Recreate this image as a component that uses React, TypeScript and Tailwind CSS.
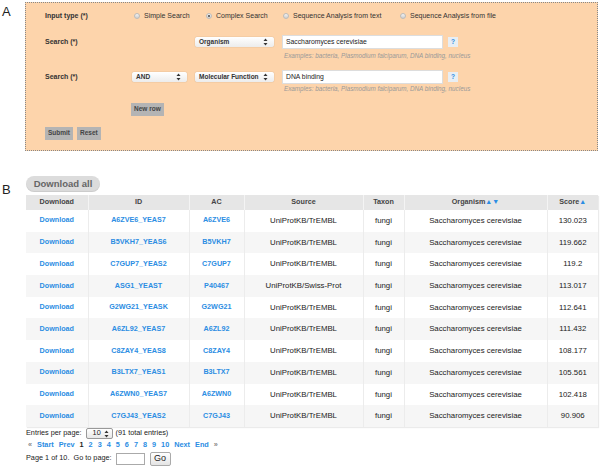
import React from "react";

const rows = [
  ["A6ZVE6_YEAS7", "A6ZVE6", "UniProtKB/TrEMBL", "130.023"],
  ["B5VKH7_YEAS6", "B5VKH7", "UniProtKB/TrEMBL", "119.662"],
  ["C7GUP7_YEAS2", "C7GUP7", "UniProtKB/TrEMBL", "119.2"],
  ["ASG1_YEAST", "P40467", "UniProtKB/Swiss-Prot", "113.017"],
  ["G2WG21_YEASK", "G2WG21", "UniProtKB/TrEMBL", "112.641"],
  ["A6ZL92_YEAS7", "A6ZL92", "UniProtKB/TrEMBL", "111.432"],
  ["C8ZAY4_YEAS8", "C8ZAY4", "UniProtKB/TrEMBL", "108.177"],
  ["B3LTX7_YEAS1", "B3LTX7", "UniProtKB/TrEMBL", "105.561"],
  ["A6ZWN0_YEAS7", "A6ZWN0", "UniProtKB/TrEMBL", "102.418"],
  ["C7GJ43_YEAS2", "C7GJ43", "UniProtKB/TrEMBL", "90.906"],
];

function Arrows() {
  return (
    <svg width="5" height="8" viewBox="0 0 5 8" className="flex-shrink-0">
      <path d="M2.5 0.5L4.5 3H0.5z" fill="#333" />
      <path d="M2.5 7.5L4.5 5H0.5z" fill="#333" />
    </svg>
  );
}

function Select({ label, width }: { label: string; width: string }) {
  return (
    <div
      className={`${width} h-[10px] flex items-center justify-between pl-[4px] pr-[6px] rounded-[2px] bg-gradient-to-b from-white to-[#ececec] shadow-[0_0_1px_rgba(0,0,0,0.35)] text-[6.5px] font-bold text-[#333] leading-none`}
    >
      <span>{label}</span>
      <Arrows />
    </div>
  );
}

function Radio({ checked, label }: { checked?: boolean; label: string }) {
  return (
    <div className="flex items-center gap-[4px]">
      <span className="w-[6px] h-[6px] rounded-full bg-gradient-to-b from-[#f4f4f4] to-[#cfcfcf] border border-[#bbb] flex items-center justify-center">
        {checked && <span className="w-[2px] h-[2px] rounded-full bg-[#444]" />}
      </span>
      <span>{label}</span>
    </div>
  );
}

function GrayButton({ label }: { label: string }) {
  return (
    <div className="h-[13px] px-[3px] bg-[#b4b4b4] flex items-center text-[6.5px] font-bold text-[#444] leading-none">
      {label}
    </div>
  );
}

function Hint() {
  return (
    <div className="ml-[239px] h-[10px] leading-[10px] text-[6.3px] italic text-[#999]">
      Examples: bacteria, Plasmodium falciparum, DNA binding, nucleus
    </div>
  );
}

function SearchInput({ value }: { value: string }) {
  return (
    <div className="flex items-center gap-[5px]">
      <div className="w-[161px] h-[14px] bg-white border border-[#ddd] pl-[3px] flex items-center text-[6.8px] font-medium text-[#222]">
        {value}
      </div>
      <div className="w-[10px] h-[10px] bg-[#e8eef4] text-[#2b8de3] font-bold text-[6.5px] flex items-center justify-center">
        ?
      </div>
    </div>
  );
}

export default function App() {
  return (
    <div
      className="w-[600px] h-[466px] bg-white text-[#222] overflow-hidden"
      style={{ fontFamily: '"Liberation Sans", Arial, sans-serif' }}
    >
      {/* Panel A */}
      <div className="flex">
        <div className="w-[25px] pl-[2px] pt-[5px] text-[13px] leading-none">A</div>
        <div className="mt-[2px] w-[573px] h-[149px] border border-dotted border-[#888] bg-[#fdd4ab] pl-[19px] text-[7px]">
          <div className="mt-[7px] h-[12px] flex items-center">
            <div className="w-[89px] font-bold text-[#333]">Input type (*)</div>
            <div className="flex items-center text-[#333]">
              <div className="w-[72px]"><Radio label="Simple Search" /></div>
              <div className="w-[77px]"><Radio checked label="Complex Search" /></div>
              <div className="w-[117px]"><Radio label="Sequence Analysis from text" /></div>
              <Radio label="Sequence Analysis from file" />
            </div>
          </div>

          <div className="mt-[13px] h-[14px] flex items-center">
            <div className="w-[87px] font-bold text-[#333]">Search (*)</div>
            <div className="w-[63px]" />
            <Select label="Organism" width="w-[79px]" />
            <div className="w-[8px]" />
            <SearchInput value="Saccharomyces cerevisiae" />
          </div>
          <div className="mt-[2px]"><Hint /></div>

          <div className="mt-[9px] h-[14px] flex items-center">
            <div className="w-[87px] font-bold text-[#333]">Search (*)</div>
            <Select label="AND" width="w-[55px]" />
            <div className="w-[8px]" />
            <Select label="Molecular Function" width="w-[79px]" />
            <div className="w-[8px]" />
            <SearchInput value="DNA binding" />
          </div>
          <Hint />

          <div className="mt-[9px] ml-[86px] flex">
            <GrayButton label="New row" />
          </div>

          <div className="mt-[11px] flex gap-[4px]">
            <GrayButton label="Submit" />
            <GrayButton label="Reset" />
          </div>
        </div>
      </div>

      {/* Panel B */}
      <div className="flex mt-[25px]">
        <div className="w-[26px] pl-[2px] pt-[7px] text-[13px] leading-none">B</div>
        <div className="w-[572px]">
          <div className="w-[74px] h-[16px] rounded-full bg-[#dcdcdc] shadow-[inset_0_-1px_1px_rgba(0,0,0,0.08)] flex items-center justify-center text-[9.5px] font-bold text-[#666]">
            Download all
          </div>
          <table className="mt-[3px] w-[572px] table-fixed border-collapse text-[7.2px] shadow-[1px_1px_1px_rgba(0,0,0,0.08)]">
            <colgroup>
              <col className="w-[62px]" />
              <col className="w-[101px]" />
              <col className="w-[55px]" />
              <col className="w-[119px]" />
              <col className="w-[41px]" />
              <col className="w-[143px]" />
              <col className="w-[51px]" />
            </colgroup>
            <thead>
              <tr className="h-[15px] bg-[#e6e6e6] text-[#444] font-bold">
                <th className="border-r border-[#f4f4f4]">Download</th>
                <th className="border-r border-[#f4f4f4]">ID</th>
                <th className="border-r border-[#f4f4f4]">AC</th>
                <th className="border-r border-[#f4f4f4]">Source</th>
                <th className="border-r border-[#f4f4f4]">Taxon</th>
                <th className="border-r border-[#f4f4f4]">
                  Organism<span className="text-[#2b8de3] text-[7px]">▲▼</span>
                </th>
                <th>
                  Score<span className="text-[#2b8de3] text-[7px]">▲</span>
                </th>
              </tr>
            </thead>
            <tbody>
              {rows.map((r, i) => (
                <tr
                  key={r[0]}
                  className={`h-[21.7px] text-center ${i % 2 === 0 ? "bg-white" : "bg-[#f6f6f6]"}`}
                >
                  <td className="border-r border-[#ececec] font-bold text-[#2b8de3]">Download</td>
                  <td className="border-r border-[#ececec] font-bold text-[#2b8de3]">{r[0]}</td>
                  <td className="border-r border-[#ececec] font-bold text-[#2b8de3]">{r[1]}</td>
                  <td className="border-r border-[#ececec] text-[#222] text-[7.8px]">{r[2]}</td>
                  <td className="border-r border-[#ececec] text-[#222] text-[7.8px]">fungi</td>
                  <td className="border-r border-[#ececec] text-[#222] text-[7.8px]">Saccharomyces cerevisiae</td>
                  <td className="text-[#222] text-[7.8px]">{r[3]}</td>
                </tr>
              ))}
            </tbody>
          </table>

          <div className="mt-[1px] h-[12px] flex items-center text-[7.3px] text-[#222]">
            <span>Entries per page:</span>
            <div className="ml-[4px] w-[27px] h-[11px] border border-[#999] rounded-[2px] bg-gradient-to-b from-white to-[#e8e8e8] flex items-center justify-between pl-[6px] pr-[3px]">
              <span>10</span>
              <Arrows />
            </div>
            <span className="ml-[3px]">(91 total entries)</span>
          </div>
          <div className="h-[11px] flex items-center gap-[5px] pl-[2px] text-[7.3px] font-bold text-[#2b8de3]">
            <span className="text-[#888]">«</span>
            <span>Start</span>
            <span>Prev</span>
            <span className="text-[#222]">1</span>
            <span>2</span>
            <span>3</span>
            <span>4</span>
            <span>5</span>
            <span>6</span>
            <span>7</span>
            <span>8</span>
            <span>9</span>
            <span>10</span>
            <span>Next</span>
            <span>End</span>
            <span className="text-[#888]">»</span>
          </div>
          <div className="mt-[1px] h-[14px] flex items-center text-[7.3px] text-[#222]">
            <span>Page 1 of 10.&nbsp; Go to page:</span>
            <div className="ml-[4px] w-[29px] h-[12px] border border-[#aaa] bg-white" />
            <div className="ml-[5px] w-[21px] h-[14px] border border-[#aaa] rounded-[2px] bg-gradient-to-b from-white to-[#e4e4e4] flex items-center justify-center text-[9px]">
              Go
            </div>
          </div>
        </div>
      </div>
    </div>
  );
}
